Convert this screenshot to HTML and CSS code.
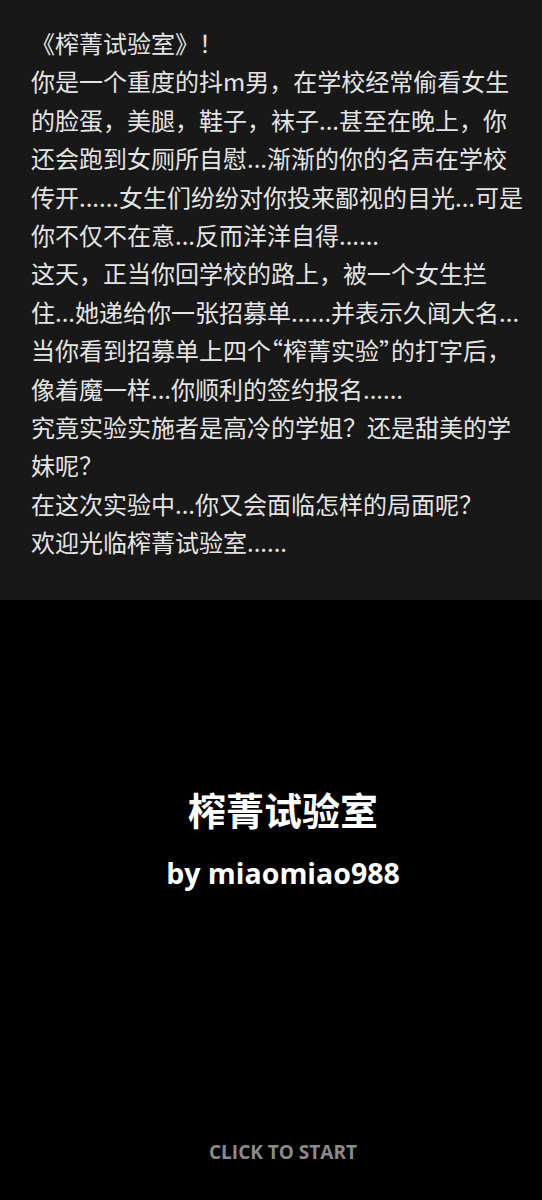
FILE: index.html
```html
<!DOCTYPE html>
<html lang="zh-CN">
<head>
  <meta charset="UTF-8">
  <meta name="viewport" content="width=device-width,initial-scale=1.0">
  <title>榨菁试验室</title>
  <link rel="stylesheet" href="styles.css">
</head>
<body>
  <section class="intro">
    <p class="intro-text">《榨菁试验室》！<br>你是一个重度的抖m男，在学校经常偷看女生的脸蛋，美腿，鞋子，袜子...甚至在晚上，你还会跑到女厕所自慰...渐渐的你的名声在学校传开......女生们纷纷对你投来鄙视的目光...可是你不仅不在意...反而洋洋自得......<br>这天，正当你回学校的路上，被一个女生拦住...她递给你一张招募单......并表示久闻大名...<br>当你看到招募单上四个<span class="quote">“</span>榨菁实验<span class="quote">”</span>的打字后，像着魔一样...你顺利的签约报名......<br>究竟实验实施者是高冷的学姐？还是甜美的学妹呢？<br>在这次实验中...你又会面临怎样的局面呢？<br>欢迎光临榨菁试验室......</p>
  </section>

  <section class="title-screen" id="start">
    <h1 class="game-title">榨菁试验室</h1>
    <p class="game-author">by miaomiao988</p>
    <button class="start-btn">CLICK TO START</button>
  </section>
</body>
</html>
```

FILE: styles.css
```css
    html, body {
      margin: 0;
      padding: 0;
      background: #000;
    }

    body {
      font-family: "Noto Sans CJK SC", "Noto Sans", sans-serif;
    }

    .intro {
      background: #181818;
      padding: 24px 14px 38px 31px;
    }
    .intro-text {
      margin: 0;
      color: #e4e4e4;
      font-size: 24px;
      line-height: 38.4px;
    }
    .intro-text .quote {
      font-feature-settings: "halt";
    }

    .title-screen {
      height: 600px;
      box-sizing: border-box;
      display: flex;
      flex-direction: column;
      align-items: center;
      padding: 182px 0 34px 24px;
      color: #fff;
    }
    .game-title {
      margin: 0;
      font-size: 38px;
      line-height: 1.4;
      font-weight: 700;
    }
    .game-author {
      margin: 19px 0 0;
      font-family: "Open Sans", "Noto Sans CJK SC", sans-serif;
      font-size: 28.5px;
      line-height: 1.4;
      font-weight: 700;
    }
    .start-btn {
      margin-top: auto;
      background: none;
      border: none;
      padding: 0;
      color: #8a8a8a;
      font-family: "Open Sans", sans-serif;
      font-size: 19px;
      line-height: 1.4;
      font-weight: 700;
      cursor: pointer;
    }
```
